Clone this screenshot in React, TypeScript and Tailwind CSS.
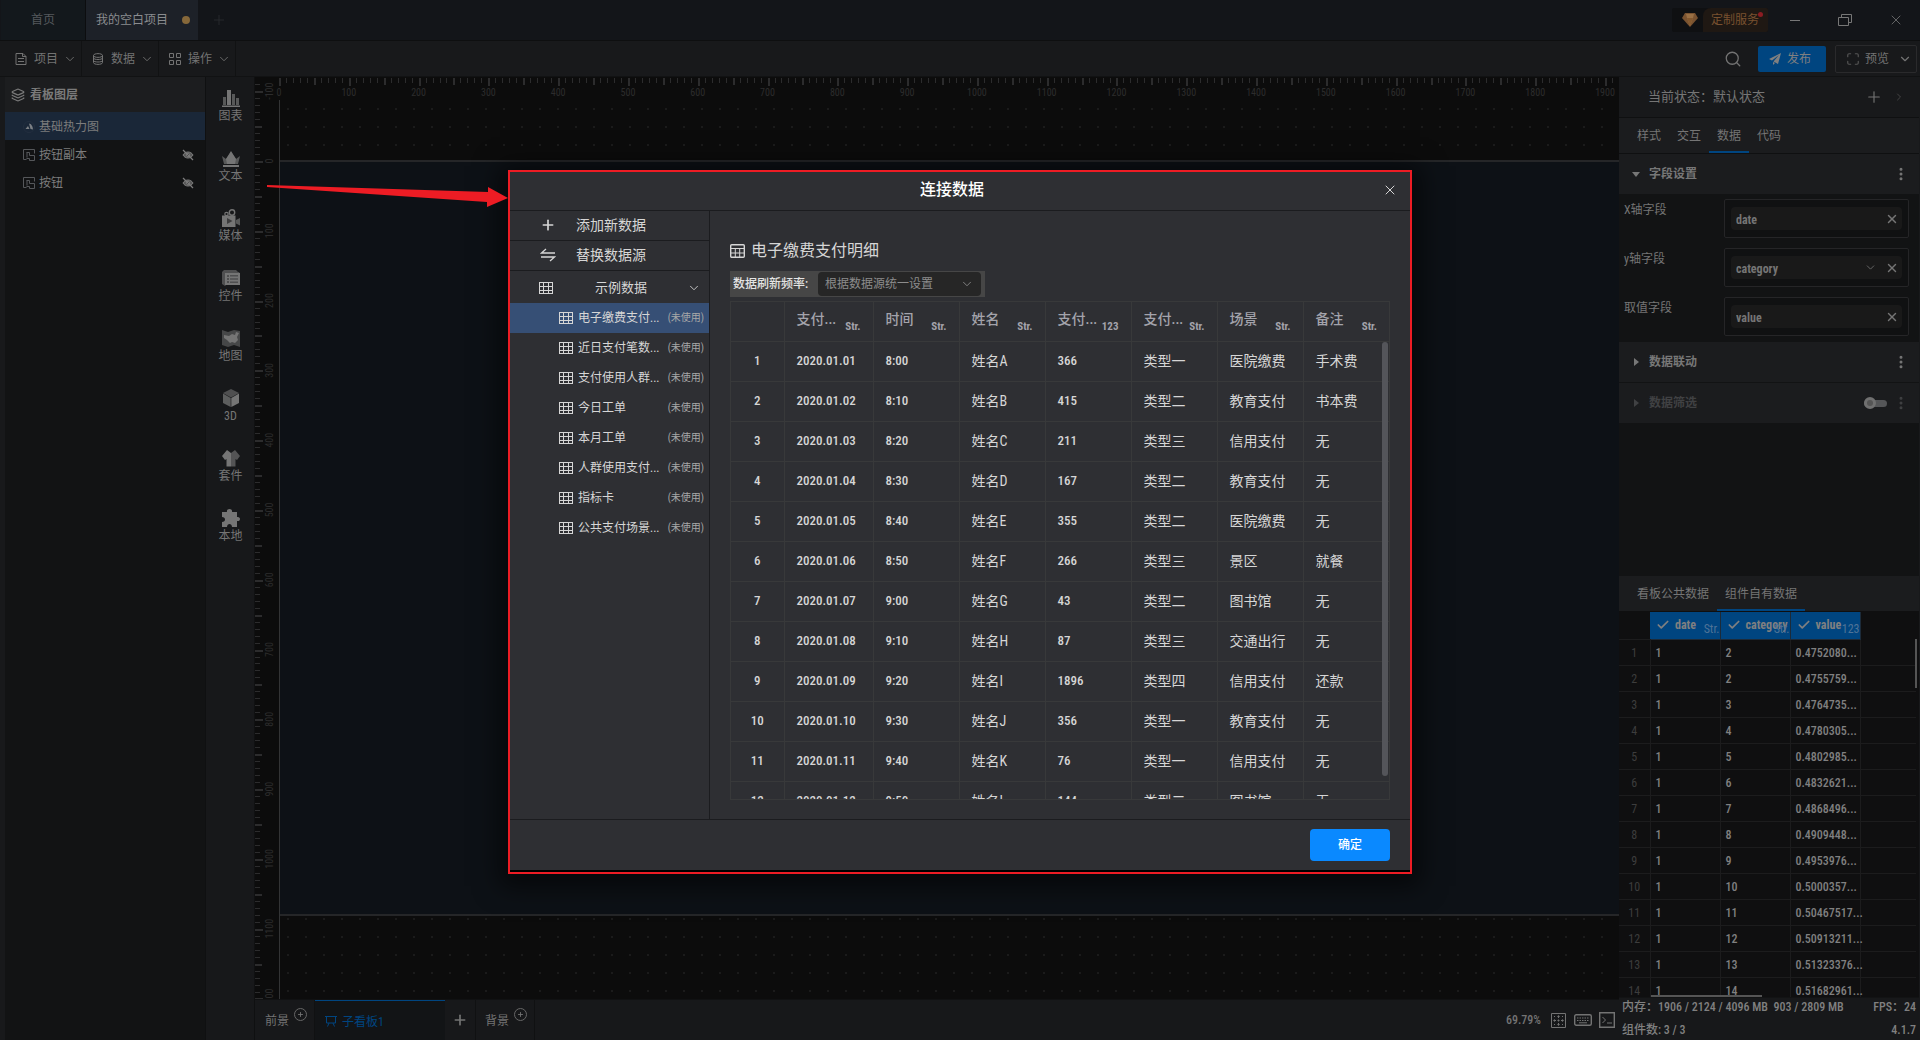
import { useState } from 'react'
import type { ReactNode } from 'react'
import { Check, ChevronDown, ChevronRight, Layers, Maximize, MoreVertical, Plus, Search, X } from 'lucide-react'

const SCALE = 0.6979

const sources = ['电子缴费支付...', '近日支付笔数...', '支付使用人群...', '今日工单', '本月工单', '人群使用支付...', '指标卡', '公共支付场景...']

const columns = [
  { name: '支付...', type: 'Str.' },
  { name: '时间', type: 'Str.' },
  { name: '姓名', type: 'Str.' },
  { name: '支付...', type: '123' },
  { name: '支付...', type: 'Str.' },
  { name: '场景', type: 'Str.' },
  { name: '备注', type: 'Str.' },
]

const payments = [
  ['2020.01.01', '8:00', '姓名A', '366', '类型一', '医院缴费', '手术费'],
  ['2020.01.02', '8:10', '姓名B', '415', '类型二', '教育支付', '书本费'],
  ['2020.01.03', '8:20', '姓名C', '211', '类型三', '信用支付', '无'],
  ['2020.01.04', '8:30', '姓名D', '167', '类型二', '教育支付', '无'],
  ['2020.01.05', '8:40', '姓名E', '355', '类型二', '医院缴费', '无'],
  ['2020.01.06', '8:50', '姓名F', '266', '类型三', '景区', '就餐'],
  ['2020.01.07', '9:00', '姓名G', '43', '类型二', '图书馆', '无'],
  ['2020.01.08', '9:10', '姓名H', '87', '类型三', '交通出行', '无'],
  ['2020.01.09', '9:20', '姓名I', '1896', '类型四', '信用支付', '还款'],
  ['2020.01.10', '9:30', '姓名J', '356', '类型一', '教育支付', '无'],
  ['2020.01.11', '9:40', '姓名K', '76', '类型一', '信用支付', '无'],
  ['2020.01.12', '9:50', '姓名L', '144', '类型二', '图书馆', '无'],
]

const heatRows = [
  ['2', '0.4752080...'],
  ['2', '0.4755759...'],
  ['3', '0.4764735...'],
  ['4', '0.4780305...'],
  ['5', '0.4802985...'],
  ['6', '0.4832621...'],
  ['7', '0.4868496...'],
  ['8', '0.4909448...'],
  ['9', '0.4953976...'],
  ['10', '0.5000357...'],
  ['11', '0.50467517...'],
  ['12', '0.50913211...'],
  ['13', '0.51323376...'],
  ['14', '0.51682961...'],
]

function GridIcon({ className }: { className?: string }) {
  return (
    <svg viewBox="0 0 14 12" className={className} fill="none" stroke="currentColor">
      <rect x="0.5" y="0.5" width="13" height="11" />
      <path d="M0 4.5h14M0 8.500h14M4.500 0v12M9.500 0v12" />
    </svg>
  )
}

const tools: { label: string; icon: ReactNode }[] = [
  {
    label: '图表',
    icon: (
      <>
        <path d="M1 8h3v8H1zM10 5h3v11h-3zM14 9h3v7h-3z" opacity="0.7" />
        <path d="M5 1h4v15H5zM0 16.5h18V18H0z" />
      </>
    ),
  },
  {
    label: '文本',
    icon: (
      <>
        <path d="M0 7l4 3 5-7 5 7 4-3-2 8H2z" opacity="0.7" />
        <path d="M9 2l5 8-1 5H5l-1-5zM1 16h16v2H1z" />
      </>
    ),
  },
  {
    label: '媒体',
    icon: (
      <>
        <circle cx="10" cy="3.5" r="2.7" fill="none" stroke="currentColor" strokeWidth="1.4" />
        <circle cx="4.500" cy="5" r="1.700" fill="none" stroke="currentColor" strokeWidth="1.2" />
        <path d="M0 6.500h13.500V18H0z" />
        <path d="M5 9v6l5.500-3z" fill="#3c3c3d" />
        <path d="M14 11l4-2v7.500l-4-2z" opacity="0.7" />
      </>
    ),
  },
  {
    label: '控件',
    icon: (
      <>
        <path d="M2 1h12l2 2h1l1 2v11H4l-1 1-3-2V3z" opacity="0.6" />
        <path fillRule="evenodd" d="M3 4h15v12H3zM5 6v2h2V6zM8 6v1.500h8V6zM5 9v2h2V9zM8 9.200v1.500h8V9.200zM5 12v2h2v-2zM8 12.400v1.500h8v-1.500z" />
      </>
    ),
  },
  {
    label: '地图',
    icon: (
      <>
        <path d="M0 1l6 2 6-2 6 1v16l-6-2-6 2-6-2z" opacity="0.5" />
        <path d="M2 6l5 1 3-2 3 1 1-3 3 1-2 4 1 3-3 3-3-1-2 1-3-3-3-2z" />
      </>
    ),
  },
  {
    label: '3D',
    icon: (
      <>
        <path d="M9 0l8 4-8 4.500L1 4z" opacity="0.6" />
        <path d="M1 4.500l7.700 4.500v9L1 14z" opacity="0.75" />
        <path d="M17 4.500L9.300 9v9L17 14z" />
      </>
    ),
  },
  {
    label: '套件',
    icon: (
      <>
        <path d="M5 1L0 7l3 4 1.500-1v7.500H9V4z" />
        <path d="M13 1l5 6-3 4-1.500-1v7.500H9V4z" opacity="0.65" />
      </>
    ),
  },
  {
    label: '本地',
    icon: <path d="M0 3h5c-1-4 6-4 5 0h5v5c4-1 4 5 0 4v6h-5c0-4-5-4-5 0H0v-5c4 0 4-5 0-5z" />,
  },
]

function Ruler() {
  const across = Array.from({ length: 200 }, (_, i) => i)
  const down = Array.from({ length: 132 }, (_, i) => i - 11)
  const tick = (n: number) => (n % 10 === 0 ? 8 : n % 5 === 0 ? 7 : 5)
  return (
    <svg className="absolute inset-0 h-full w-full text-[10px]" fill="#2c2c2d">
      {across.map((n) => (
        <g key={n}>
          <rect x={Math.round(24 + n * 10 * SCALE)} y="1" width={n % 5 === 0 ? 2 : 1} height={tick(n)} />
          {n % 10 === 0 && (
            <text x={24 + n * 10 * SCALE} y="19" textAnchor="middle">
              {n * 10}
            </text>
          )}
        </g>
      ))}
      {down.map((n) => {
        const y = 84 + n * 10 * SCALE
        return (
          <g key={n}>
            <rect x="0" y={Math.round(y)} width={tick(n)} height={n % 5 === 0 ? 2 : 1} />
            {n % 10 === 0 && (
              <text transform={`translate(18 ${y}) rotate(-90)`} textAnchor="middle">
                {n * 10}
              </text>
            )}
          </g>
        )
      })}
    </svg>
  )
}

function TitleBar() {
  return (
    <header className="flex h-[41px] shrink-0 items-stretch border-b border-[#0e0f10] bg-[#131519] pl-px">
      <a href="#home" className="flex w-[85px] items-center justify-center border-r border-[#0c0d0f] bg-[#13181c] text-[#55585c]">
        首页
      </a>
      <a href="#project" className="flex w-[112px] items-center bg-[#1d2128] pl-[10px] text-[#8a8c8f]">
        我的空白项目
        <span className="ml-[14px] size-2 rounded-full bg-[#86683a]"></span>
      </a>
      <button className="ml-[13px] text-[#26292d]" aria-label="新建标签">
        <Plus size={16} strokeWidth={1.5} />
      </button>
      <div className="flex-1"></div>
      <div className="flex items-center">
        <a href="#service" className="relative flex h-6 w-24 items-center justify-between rounded-xs bg-[#0f1012] pl-[10px] text-[#79512f]">
          <svg viewBox="0 0 16 14" className="h-[14px] w-4">
            <path d="M3 0h10l3 5-8 9-8-9z" fill="#7a5330" />
            <path d="M4 1h8l-1 4-3 8-3-8z" fill="#9a7044" />
            <path d="M5 5h6l-3 8z" fill="#84592f" />
          </svg>
          <span className="flex h-full w-[65px] items-center rounded-r-xs rounded-tl-lg bg-[#1f1813] pl-2">定制服务</span>
          <span className="absolute top-1 right-[5px] size-[5px] rounded-full bg-[#8c1c22]"></span>
        </a>
        <button className="ml-[22px] flex h-6 w-[10px] items-center" aria-label="最小化">
          <span className="h-px w-full bg-[#777]"></span>
        </button>
        <button className="ml-[38px] text-[#777]" aria-label="还原">
          <svg viewBox="0 0 14 12" className="h-3 w-[14px]" fill="none" stroke="currentColor">
            <path d="M0.500 3.500h10v8h-10zM3.500 3.500v-3h10v8h-3" />
          </svg>
        </button>
        <button className="mr-4 ml-[36px] text-[#777]" aria-label="关闭窗口">
          <X size={16} strokeWidth={1.2} />
        </button>
      </div>
    </header>
  )
}

function ToolBar() {
  return (
    <div className="flex h-9 shrink-0 items-center border-b border-[#111213] bg-[#18191b] pl-[5px] text-[#737373]">
      {['项目', '数据', '操作'].map((name) => (
        <button key={name} className="flex h-full w-[77px] items-center border-r border-[#111213] pl-[10px]">
          <svg viewBox="0 0 12 12" className="mr-[7px] size-3" fill="none" stroke="currentColor">
            {name === '项目' && <path d="M1 0.500h7l3 3v8H1zM7.500 0.500v3H11M3 5.500h6M3 8.500h6" />}
            {name === '数据' && (
              <path d="M1.500 2.500c0-2.500 9-2.500 9 0s-9 2.500-9 0v7c0 2.500 9 2.500 9 0v-7M1.500 5c0 2 9 2 9 0M1.500 7.500c0 2 9 2 9 0" />
            )}
            {name === '操作' && <path d="M0.500 0.500h4v4h-4zM7.500 0.500h4v4h-4zM0.500 7.500h4v4h-4zM7.500 7.500h4v4h-4z" />}
          </svg>
          {name}
          <ChevronDown size={14} strokeWidth={1.5} className="ml-[5px]" />
        </button>
      ))}
      <div className="flex-1"></div>
      <button className="mr-4" aria-label="搜索">
        <Search size={18} strokeWidth={1.7} />
      </button>
      <button className="mr-[9px] flex h-[26px] w-[68px] items-center gap-[6px] rounded-xs bg-[#004580] pl-[11px] text-[#808080]">
        <svg viewBox="0 0 12 12" className="size-3" fill="currentColor">
          <path d="M12 0L0 6l3 1.500L10 2 4.500 8.500 9 11zM4 9v3l2-2z" />
        </svg>
        发布
      </button>
      <button className="mr-[3px] flex h-7 w-[82px] items-center rounded-xs border border-[#2a2a2c] pl-[10px]">
        <Maximize size={14} strokeWidth={2} className="mr-[5px] text-[#555]" />
        预览
        <ChevronDown size={14} className="ml-[9px]" />
      </button>
    </div>
  )
}

function LayerPanel() {
  return (
    <aside className="w-[201px] shrink-0 border-r border-[#0f1011] bg-[#121314] text-[#7c7c7c]">
      <h2 className="flex h-[35px] items-center bg-[#1c1d1f] pl-[6px] font-bold text-[#7a7a7a]">
        <Layers size={14} strokeWidth={2} className="mr-[5px]" />
        看板图层
      </h2>
      <ul>
        {['基础热力图', '按钮副本', '按钮'].map((name, i) => (
          <li key={name} className={i === 0 ? 'flex h-7 items-center bg-[#1a2738] pt-px pl-[18px]' : 'flex h-7 items-center pt-px pl-[18px]'}>
            <svg viewBox="0 0 12 12" className="mr-1 size-3" fill="none" stroke="#55575a">
              {i === 0 ? (
                <>
                  <circle cx="6" cy="6" r="5.500" stroke="#232f3f" />
                  <path d="M2.500 8L5 5l1.500 3zM6 2.500c2 0 4 3 4 6L7.500 8z" fill="#7c8085" stroke="none" />
                </>
              ) : (
                <path d="M3.500 10.500h-3v-10h11v4M3.500 3.500h3v3h5v5h-5v-2h-3M4 3.500v5" />
              )}
            </svg>
            {name}
            {i > 0 && (
              <button className="mr-[11px] ml-auto" aria-label={`显示${name}`}>
                <svg viewBox="0 0 12 12" className="size-3" fill="none" stroke="currentColor">
                  <path d="M1 6c2-4 8-4 10 0-2 4-8 4-10 0z" fill="#5a5a5a" />
                  <circle cx="6" cy="6" r="1.500" fill="#121314" />
                  <path d="M1 1l10 10" strokeWidth="1.300" />
                </svg>
              </button>
            )}
          </li>
        ))}
      </ul>
    </aside>
  )
}

function Canvas() {
  return (
    <div className="relative flex-1 overflow-hidden bg-[#0c0c0c]">
      <svg className="absolute inset-0 h-full w-full">
        <defs>
          <pattern id="dots" x="32" y="31" width="18" height="18" patternUnits="userSpaceOnUse">
            <rect width="2" height="2" fill="#1b1b1b" />
          </pattern>
        </defs>
        <rect x="26" y="24" width="100%" height="100%" fill="url(#dots)" />
      </svg>
      <Ruler />
      {/* board on the canvas */}
      <div className="absolute top-[83px] left-6 h-[756px] w-[1341px] border-y-2 border-[#252628] bg-[#0d1116]"></div>
      <div className="absolute top-[23px] bottom-0 left-6 w-px bg-[#333435]"></div>
    </div>
  )
}

function BoardTabs() {
  const badge = (
    <span className="mb-3 ml-[5px] flex size-[13px] items-center justify-center rounded-full border border-[#666]">
      <Plus size={7} strokeWidth={3} />
    </span>
  )
  return (
    <div className="flex h-[41px] shrink-0 items-stretch border-t border-[#101112] bg-[#17181a] text-[#737373]">
      <button className="flex w-[60px] items-center border-r border-[#101112] pl-[10px]">
        <span className="pt-[2px]">前景</span>
        {badge}
      </button>
      <button className="flex w-[130px] items-center border-t border-[#004580] bg-[#121416] pl-[10px] text-[#004580]">
        <svg viewBox="0 0 12 12" className="mr-[5px] size-3" fill="none" stroke="currentColor">
          <path d="M0 1.500h12M1.500 1.500v6.500h9v-6.500M4 8l-1.500 3.500M8 8l1.500 3.500" />
        </svg>
        <span className="pt-[2px]">子看板1</span>
      </button>
      <button className="flex w-[31px] items-center justify-center border-r border-[#101112]" aria-label="新建子看板">
        <Plus size={16} strokeWidth={2.5} />
      </button>
      <button className="flex w-[59px] items-center border-r border-[#101112] pl-[9px]">
        <span className="pt-[2px]">背景</span>
        {badge}
      </button>
      <div className="flex-1"></div>
      <div className="flex items-center font-medium">
        <span className="mr-[10px]">69.79%</span>
        <svg viewBox="0 0 15 15" className="mr-[8px] size-[15px]" fill="none" stroke="currentColor">
          <path d="M0.500 0.500h14v14h-14z" />
          <path d="M7.500 3v9M3 7.500h9" strokeDasharray="2 1.500" />
          <path d="M6 4l1.500-2L9 4zM6 11l1.500 2L9 11zM4 6L2 7.500 4 9zM11 6l2 1.500L11 9z" fill="currentColor" stroke="none" />
          <path d="M3 3.500h1M11 3.500h1M3 11.500h1M11 11.500h1" />
        </svg>
        <svg viewBox="0 0 18 12" className="mr-[7px] h-3 w-[18px]" fill="none" stroke="currentColor">
          <rect x="0.700" y="0.700" width="16.600" height="10.600" rx="1.500" strokeWidth="1.400" />
          <path d="M3 4h12M3 6.500h12" strokeDasharray="1.500 1" />
          <path d="M5 8.800h8" />
        </svg>
        <svg viewBox="0 0 16 16" className="mr-1 size-4" fill="none" stroke="currentColor">
          <path d="M0.700 0.700h14.600v14.600H0.700z" strokeWidth="1.400" />
          <path d="M3.500 5l3 3-3 3M8 11h5" />
        </svg>
      </div>
    </div>
  )
}

function Field({ label, value, select }: { label: string; value: string; select?: boolean }) {
  return (
    <div className="flex h-[49px] pr-[10px] pl-[5px]">
      <label htmlFor={value} className="w-[100px] pt-[2px]">
        {label}
      </label>
      <div className="h-[39px] flex-1 rounded-xs border border-[#252527] bg-[#101112] p-[6px] pt-[7px]">
        <div className="flex h-[23px] items-center rounded-sm bg-[#191919] pr-[3px] pl-[5px]">
          <input id={value} defaultValue={value} className="w-0 flex-1 bg-transparent pt-[2px] font-bold outline-none" />
          {select && <ChevronDown size={13} strokeWidth={1.5} className="mr-2" />}
          <button aria-label={`清除${label}`}>
            <X size={14} strokeWidth={2.5} />
          </button>
        </div>
      </div>
    </div>
  )
}

function Section({ title, open, off }: { title: string; open?: boolean; off?: boolean }) {
  return (
    <div className={off ? 'flex h-10 items-center bg-[#1b1c1e] pl-3 text-[#404143]' : 'flex h-10 items-center bg-[#1b1c1e] pl-3 text-[#777]'}>
      <svg viewBox="0 0 10 10" className="mr-2 size-[10px]" fill="currentColor">
        {open ? <path d="M1 3h8L5 8z" /> : <path d="M3 1v8l5-4z" />}
      </svg>
      <h3 className="font-bold">{title}</h3>
      <div className="flex-1"></div>
      {off && (
        <label className="relative flex h-3 w-[23px] items-center">
          <input type="checkbox" aria-label={title} className="h-[7px] w-full appearance-none rounded-full bg-[#555658]" />
          <span className="absolute left-0 size-3 rounded-full border-3 border-[#707070] bg-[#555]"></span>
        </label>
      )}
      <button className="mr-[10px] ml-[6px]" aria-label={`${title}更多`}>
        <MoreVertical size={16} strokeWidth={2.5} />
      </button>
    </div>
  )
}

function Inspector() {
  return (
    <aside className="mr-px flex w-[300px] shrink-0 flex-col bg-[#121314] text-[#757575]">
      <div className="flex h-[41px] shrink-0 items-center border-b border-[#0f1011] bg-[#18191b] pl-[29px] text-[13px]">
        当前状态：默认状态
        <div className="flex-1"></div>
        <button aria-label="添加状态">
          <Plus size={18} strokeWidth={1.5} />
        </button>
        <ChevronRight size={12} className="mr-[14px] ml-[10px] text-[#444]" />
      </div>
      <nav className="flex h-9 shrink-0 border-b border-[#0f1011] bg-[#1b1c1e] pl-[10px]">
        {['样式', '交互', '数据', '代码'].map((tab) => (
          <a
            key={tab}
            href={`#${tab}`}
            className={tab === '数据' ? 'flex w-10 items-center justify-center border-b-2 border-[#004580] pt-[2px]' : 'flex w-10 items-center justify-center'}
          >
            {tab}
          </a>
        ))}
      </nav>
      <Section title="字段设置" open />
      <div className="flex flex-col pt-[5px]">
        <Field label="X轴字段" value="date" />
        <Field label="y轴字段" value="category" select />
        <Field label="取值字段" value="value" />
      </div>
      <div className="-mt-1 flex flex-col gap-px">
        <Section title="数据联动" />
        <Section title="数据筛选" off />
      </div>
      <div className="flex-1"></div>
      <nav className="flex h-[35px] shrink-0 bg-[#1b1c1e] pl-[10px]">
        <a href="#public" className="flex w-[88px] items-center justify-center">
          看板公共数据
        </a>
        <a href="#own" className="flex w-[88px] items-center justify-center border-b-2 border-[#004580] pt-[2px]">
          组件自有数据
        </a>
      </nav>
      <div className="relative h-[386px] shrink-0 overflow-hidden bg-[#0f0f10] pt-px pr-[3px]">
        <table className="w-full table-fixed border-collapse font-medium text-[#808080]">
          <colgroup>
            <col className="w-[31px]" />
            <col className="w-[70px]" />
            <col className="w-[70px]" />
            <col className="w-[70px]" />
            <col />
          </colgroup>
          <thead>
            <tr className="h-[27px]">
              <th className="border-b border-[#1c1c1d]"></th>
              {['date', 'category', 'value'].map((name) => (
                <th key={name} className="border-r border-b border-[#1c2b3a] bg-[#004580] p-0">
                  <div className="flex items-center">
                    <Check size={14} strokeWidth={3} className="mr-[5px] ml-[6px] shrink-0" />
                    {name}
                    <span className="-ml-4 flex-1 pt-2 text-right font-normal text-[#4f7397]">{name === 'value' ? '123' : 'Str.'}</span>
                  </div>
                </th>
              ))}
              <th></th>
            </tr>
          </thead>
          <tbody>
            {heatRows.map(([category, value], i) => (
              <tr key={i} className="h-[26px] border-b border-[#1c1c1d]">
                <td className="border-r border-[#1c1c1d] p-0 pt-px text-center font-normal text-[#3d3d3d]">{i + 1}</td>
                <td className="border-r border-[#1c1c1d] p-0 pt-px pl-[5px]">1</td>
                <td className="border-r border-[#1c1c1d] p-0 pt-px pl-[5px]">{category}</td>
                <td className="border-r border-[#1c1c1d] p-0 pt-px pl-[5px]">{value}</td>
                <td></td>
              </tr>
            ))}
          </tbody>
        </table>
        <span className="absolute top-7 right-[2px] h-[49px] w-[2px] bg-[#555]"></span>
        <span className="absolute bottom-0 left-8 h-[2px] w-[111px] bg-[#555]"></span>
      </div>
      <footer className="mt-px flex h-[42px] shrink-0 flex-col justify-between bg-[#17181a] px-[3px] pb-px font-medium text-[#808080]">
        <div className="flex whitespace-pre">
          内存：{'1906 / 2124 / 4096 MB  903 / 2809 MB'}
          <span className="ml-auto">FPS：24</span>
        </div>
        <div className="flex justify-between">
          <span>组件数: 3 / 3</span>
          <span>4.1.7</span>
        </div>
      </footer>
    </aside>
  )
}

function Arrow() {
  return (
    <svg viewBox="0 0 242 24" className="absolute top-[13px] right-full h-6 w-[242px]" fill="#ed1c24">
      <path d="M1 2L222 9V4l20 11-21 9v-5L1 4z" />
    </svg>
  )
}

function SwapIcon() {
  return (
    <svg viewBox="0 0 16 14" className="mr-5 h-[14px] w-4" fill="none" stroke="currentColor" strokeWidth="1.300">
      <path d="M6 1L1.500 5H15M10 13l4.500-4H1" />
    </svg>
  )
}

function DataModal({ onClose }: { onClose: () => void }) {
  const [current, setCurrent] = useState(0)
  return (
    <div className="fixed inset-0 flex items-center justify-center pt-1">
      <div className="relative">
        <Arrow />
        <div role="dialog" aria-label="连接数据" className="h-[704px] w-[904px] border-2 border-[#ed1c24] bg-black pb-[2px] shadow-[0_4px_24px_8px_rgba(0,0,0,0.6)]">
          <div className="flex h-full flex-col bg-[#2e2f33] text-[#d6d6d6]">
            <div className="flex h-[39px] shrink-0 items-center border-b border-[#1b1c1f] pb-[2px]">
              <h1 className="flex-1 pl-6 text-center text-[16px] font-medium text-white">连接数据</h1>
              <button onClick={onClose} className="flex w-10 justify-center" aria-label="关闭">
                <X size={16} strokeWidth={1.5} />
              </button>
            </div>
            <div className="flex min-h-0 flex-1">
              <div className="w-[200px] shrink-0 border-r border-[#1b1c1f]">
                <button className="flex h-[30px] w-full items-center border-b border-[#1b1c1f] pb-px pl-[30px] text-[14px]">
                  <Plus size={16} strokeWidth={2.5} className="mr-5" />
                  添加新数据
                </button>
                <button className="flex h-[30px] w-full items-center border-b border-[#1b1c1f] pb-px pl-[30px] text-[14px]">
                  <SwapIcon />
                  替换数据源
                </button>
                <button className="flex h-8 w-full items-center pt-[2px] pl-[29px] text-[13px]">
                  <GridIcon className="h-3 w-[14px]" />
                  <span className="flex-1 pl-[42px] text-left">示例数据</span>
                  <ChevronDown size={14} strokeWidth={1.5} className="mr-2" />
                </button>
                {sources.map((name, i) => (
                  <button
                    key={name}
                    onClick={() => setCurrent(i)}
                    className={
                      i === current
                        ? 'flex h-[30px] w-full items-center bg-[#364f75] pr-[5px] pl-[49px]'
                        : 'flex h-[30px] w-full items-center pr-[5px] pl-[49px]'
                    }
                  >
                    <GridIcon className="mr-[5px] h-3 w-[14px]" />
                    {name}
                    <span className="ml-auto text-[10px] text-[#a8a8a8]">(未使用)</span>
                  </button>
                ))}
              </div>

              <div className="flex min-w-0 flex-1 flex-col px-5 pb-[19px]">
                <h2 className="mt-7 flex h-6 items-center text-[16px]">
                  <svg viewBox="0 0 15 14" className="mr-[6px] h-[14px] w-[15px]" fill="none" stroke="currentColor">
                    <rect x="0.700" y="0.700" width="13.600" height="12.600" rx="1" strokeWidth="1.400" />
                    <path d="M1 4.500h13M1 9h13M5.300 4.500v9M9.700 4.500v9" />
                  </svg>
                  电子缴费支付明细
                </h2>
                <div className="mt-2 flex h-[26px] w-[255px] shrink-0 items-center justify-between bg-[#464646] pr-1 pl-[3px]">
                  <label htmlFor="refresh" className="font-medium text-[#e4e4e4]">
                    数据刷新频率:
                  </label>
                  <div className="relative flex items-center">
                    <select id="refresh" className="h-6 w-[163px] appearance-none rounded-sm bg-[#262626] pl-[7px] text-[#8c8c8c]">
                      <option>根据数据源统一设置</option>
                    </select>
                    <ChevronDown size={14} strokeWidth={1.5} className="pointer-events-none absolute right-[7px] text-[#8c8c8c]" />
                  </div>
                </div>

                <div className="relative mt-1 min-h-0 flex-1 overflow-hidden border border-[#38393a]">
                  <table className="w-full table-fixed border-collapse text-left text-[14px]">
                    <colgroup>
                      <col className="w-[53px]" />
                      <col className="w-[89px]" />
                    </colgroup>
                    <thead>
                      <tr className="h-[39px] border-b border-[#38393a] text-[#a3a3ab]">
                        <th></th>
                        {columns.map((col, i) => (
                          <th key={i} className="border-l border-[#38393a] p-0 pr-3 pb-1 pl-3 font-medium">
                            <div className="flex items-center justify-between">
                              {col.name}
                              <span className="pt-4 text-[11px] leading-3 font-bold">{col.type}</span>
                            </div>
                          </th>
                        ))}
                      </tr>
                    </thead>
                    <tbody>
                      {payments.map((row, i) => (
                        <tr key={i} className="h-10 border-b border-[#38393a]">
                          <td className="p-0 pb-px text-center text-[13px] font-medium">{i + 1}</td>
                          {row.map((cell, j) => (
                            <td
                              key={j}
                              className={
                                j < 2 || j === 3
                                  ? 'border-l border-[#38393a] p-0 pb-px pl-3 text-[13px] font-medium'
                                  : 'border-l border-[#38393a] p-0 pb-px pl-3'
                              }
                            >
                              {cell}
                            </td>
                          ))}
                        </tr>
                      ))}
                    </tbody>
                  </table>
                  <span className="absolute top-10 right-px h-[434px] w-[6px] rounded-full bg-[#54555a]"></span>
                </div>
              </div>
            </div>
            <div className="flex h-[51px] shrink-0 items-center justify-end border-t border-[#1b1c1f] pr-5">
              <button onClick={onClose} className="h-8 w-20 rounded-sm bg-[#0a89ff] text-[12px] font-medium text-white">
                确定
              </button>
            </div>
          </div>
        </div>
      </div>
    </div>
  )
}

export default function App() {
  const [open, setOpen] = useState(true)

  return (
    <div className="flex h-screen flex-col overflow-hidden bg-[#18191b] font-[family-name:'Roboto_Condensed','Noto_Sans_CJK_SC',sans-serif] text-[12px] leading-[18px]">
      <TitleBar />
      <ToolBar />
      <div className="flex min-h-0 flex-1 pl-[5px]">
        <LayerPanel />
        <div className="w-[49px] shrink-0 border-r border-[#0f1011] bg-[#17181a] pt-3 pl-px text-[#757575]">
          {tools.map((tool) => (
            <button key={tool.label} className="flex h-[60px] w-full flex-col items-center">
              <svg viewBox="0 0 18 18" className="size-[18px]" fill="currentColor">
                {tool.icon}
              </svg>
              {tool.label}
            </button>
          ))}
        </div>
        <div className="flex min-w-0 flex-1 flex-col">
          <Canvas />
          <BoardTabs />
        </div>
        <Inspector />
      </div>
      {open && <DataModal onClose={() => setOpen(false)} />}
    </div>
  )
}
